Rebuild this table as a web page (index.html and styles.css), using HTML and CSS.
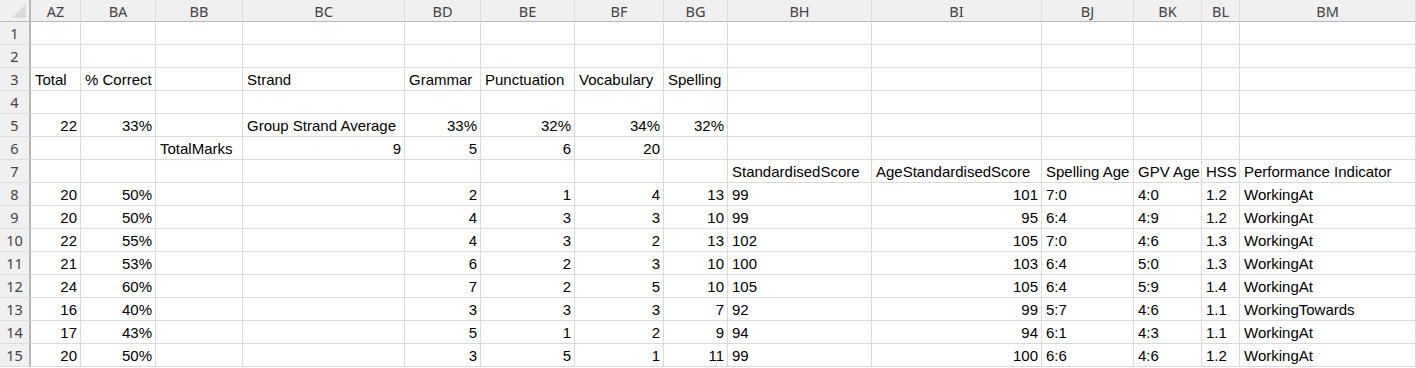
FILE: index.html
```html
<!DOCTYPE html>
<html>
<head>
<meta charset="utf-8">
<link rel="stylesheet" href="styles.css">
</head>
<body>
<div class="sheet">
  <div class="corner"><span class="tri"></span></div>
  <div class="ch">AZ</div><div class="ch">BA</div><div class="ch">BB</div><div class="ch">BC</div><div class="ch">BD</div><div class="ch">BE</div><div class="ch">BF</div><div class="ch">BG</div><div class="ch">BH</div><div class="ch">BI</div><div class="ch">BJ</div><div class="ch">BK</div><div class="ch">BL</div><div class="ch">BM</div>

  <div class="rh">1</div><div class="c"></div><div class="c"></div><div class="c"></div><div class="c"></div><div class="c"></div><div class="c"></div><div class="c"></div><div class="c"></div><div class="c"></div><div class="c"></div><div class="c"></div><div class="c"></div><div class="c"></div><div class="c"></div>

  <div class="rh">2</div><div class="c"></div><div class="c"></div><div class="c"></div><div class="c"></div><div class="c"></div><div class="c"></div><div class="c"></div><div class="c"></div><div class="c"></div><div class="c"></div><div class="c"></div><div class="c"></div><div class="c"></div><div class="c"></div>

  <div class="rh">3</div><div class="c">Total</div><div class="c">% Correct</div><div class="c"></div><div class="c">Strand</div><div class="c">Grammar</div><div class="c">Punctuation</div><div class="c">Vocabulary</div><div class="c">Spelling</div><div class="c"></div><div class="c"></div><div class="c"></div><div class="c"></div><div class="c"></div><div class="c"></div>

  <div class="rh">4</div><div class="c"></div><div class="c"></div><div class="c"></div><div class="c"></div><div class="c"></div><div class="c"></div><div class="c"></div><div class="c"></div><div class="c"></div><div class="c"></div><div class="c"></div><div class="c"></div><div class="c"></div><div class="c"></div>

  <div class="rh">5</div><div class="c r">22</div><div class="c r">33%</div><div class="c"></div><div class="c">Group Strand Average</div><div class="c r">33%</div><div class="c r">32%</div><div class="c r">34%</div><div class="c r">32%</div><div class="c"></div><div class="c"></div><div class="c"></div><div class="c"></div><div class="c"></div><div class="c"></div>

  <div class="rh">6</div><div class="c"></div><div class="c"></div><div class="c">TotalMarks</div><div class="c r">9</div><div class="c r">5</div><div class="c r">6</div><div class="c r">20</div><div class="c"></div><div class="c"></div><div class="c"></div><div class="c"></div><div class="c"></div><div class="c"></div><div class="c"></div>

  <div class="rh">7</div><div class="c"></div><div class="c"></div><div class="c"></div><div class="c"></div><div class="c"></div><div class="c"></div><div class="c"></div><div class="c"></div><div class="c">StandardisedScore</div><div class="c">AgeStandardisedScore</div><div class="c">Spelling Age</div><div class="c">GPV Age</div><div class="c">HSS</div><div class="c">Performance Indicator</div>

  <div class="rh">8</div><div class="c r">20</div><div class="c r">50%</div><div class="c"></div><div class="c"></div><div class="c r">2</div><div class="c r">1</div><div class="c r">4</div><div class="c r">13</div><div class="c">99</div><div class="c r">101</div><div class="c">7:0</div><div class="c">4:0</div><div class="c">1.2</div><div class="c">WorkingAt</div>

  <div class="rh">9</div><div class="c r">20</div><div class="c r">50%</div><div class="c"></div><div class="c"></div><div class="c r">4</div><div class="c r">3</div><div class="c r">3</div><div class="c r">10</div><div class="c">99</div><div class="c r">95</div><div class="c">6:4</div><div class="c">4:9</div><div class="c">1.2</div><div class="c">WorkingAt</div>

  <div class="rh">10</div><div class="c r">22</div><div class="c r">55%</div><div class="c"></div><div class="c"></div><div class="c r">4</div><div class="c r">3</div><div class="c r">2</div><div class="c r">13</div><div class="c">102</div><div class="c r">105</div><div class="c">7:0</div><div class="c">4:6</div><div class="c">1.3</div><div class="c">WorkingAt</div>

  <div class="rh">11</div><div class="c r">21</div><div class="c r">53%</div><div class="c"></div><div class="c"></div><div class="c r">6</div><div class="c r">2</div><div class="c r">3</div><div class="c r">10</div><div class="c">100</div><div class="c r">103</div><div class="c">6:4</div><div class="c">5:0</div><div class="c">1.3</div><div class="c">WorkingAt</div>

  <div class="rh">12</div><div class="c r">24</div><div class="c r">60%</div><div class="c"></div><div class="c"></div><div class="c r">7</div><div class="c r">2</div><div class="c r">5</div><div class="c r">10</div><div class="c">105</div><div class="c r">105</div><div class="c">6:4</div><div class="c">5:9</div><div class="c">1.4</div><div class="c">WorkingAt</div>

  <div class="rh">13</div><div class="c r">16</div><div class="c r">40%</div><div class="c"></div><div class="c"></div><div class="c r">3</div><div class="c r">3</div><div class="c r">3</div><div class="c r">7</div><div class="c">92</div><div class="c r">99</div><div class="c">5:7</div><div class="c">4:6</div><div class="c">1.1</div><div class="c">WorkingTowards</div>

  <div class="rh">14</div><div class="c r">17</div><div class="c r">43%</div><div class="c"></div><div class="c"></div><div class="c r">5</div><div class="c r">1</div><div class="c r">2</div><div class="c r">9</div><div class="c">94</div><div class="c r">94</div><div class="c">6:1</div><div class="c">4:3</div><div class="c">1.1</div><div class="c">WorkingAt</div>

  <div class="rh">15</div><div class="c r">20</div><div class="c r">50%</div><div class="c"></div><div class="c"></div><div class="c r">3</div><div class="c r">5</div><div class="c r">1</div><div class="c r">11</div><div class="c">99</div><div class="c r">100</div><div class="c">6:6</div><div class="c">4:6</div><div class="c">1.2</div><div class="c">WorkingAt</div>
</div>
</body>
</html>
```

FILE: styles.css
```css
html, body {
  margin: 0;
  padding: 0;
  background: #ffffff;
  overflow: hidden;
}

.sheet {
  display: grid;
  grid-template-columns: 31px 50px 75px 87px 162px 76px 94px 89px 64px 144px 170px 92px 68px 38px 176px;
  grid-template-rows: 22px;
  grid-auto-rows: 23px;
  width: 1416px;
  font-family: "Liberation Sans", Arial, sans-serif;
  font-size: 15px;
  color: #000;
}

.corner {
  position: relative;
  background: #f0f0f0;
  border-right: 2px solid #b8b8b8;
  border-bottom: 1px solid #b8b8b8;
  box-sizing: border-box;
}

.tri {
  position: absolute;
  right: 3px;
  bottom: 3px;
  width: 0;
  height: 0;
  border-left: 14px solid transparent;
  border-bottom: 14px solid #dadada;
}

.ch {
  background: #f0f0f0;
  border-right: 1px solid #dcdcdc;
  border-bottom: 1px solid #b8b8b8;
  box-sizing: border-box;
  display: flex;
  align-items: center;
  justify-content: center;
  font-family: "Noto Sans", "Open Sans", sans-serif;
  font-size: 14.5px;
  color: #444444;
}

.rh {
  background: #f0f0f0;
  border-right: 2px solid #b8b8b8;
  border-bottom: 1px solid #dcdcdc;
  box-sizing: border-box;
  display: flex;
  align-items: center;
  justify-content: center;
  font-family: "Noto Sans", "Open Sans", sans-serif;
  font-size: 14.5px;
  color: #444444;
}

.c {
  border-right: 1px solid #dadada;
  border-bottom: 1px solid #dadada;
  box-sizing: border-box;
  padding: 3px 4px 0 4px;
  line-height: 18px;
  white-space: nowrap;
  overflow: visible;
}

.r {
  text-align: right;
  padding-right: 3px;
}
```
